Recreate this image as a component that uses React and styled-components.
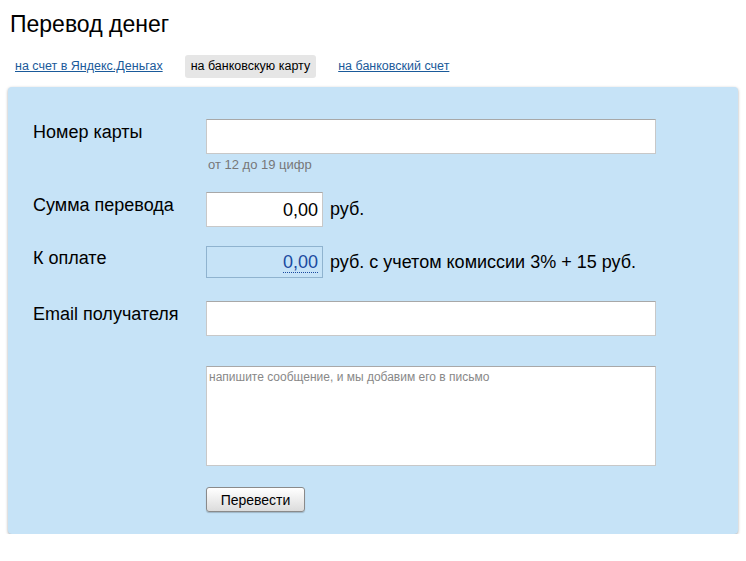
import styled, { createGlobalStyle } from 'styled-components';

const Global = createGlobalStyle`
  body {
    margin: 0;
    background: #ffffff;
    font-family: Arial, "Liberation Sans", sans-serif;
    color: #000;
  }
`;

const Page = styled.div`
  padding: 10px 8px 0 8px;
`;

const Title = styled.h1`
  margin: 0 0 0 2px;
  font-size: 23px;
  font-weight: normal;
  line-height: 28px;
`;

const Tabs = styled.div`
  display: flex;
  align-items: center;
  gap: 16px;
  margin: 17px 0 9px 0;
  font-size: 12.5px;
`;

const Tab = styled.span`
  padding: 4px 6px 5px;
  border-radius: 3px;
  color: ${(p) => (p.active ? '#000' : '#1a5a9a')};
  background: ${(p) => (p.active ? '#e6e6e6' : 'transparent')};
  text-decoration: ${(p) => (p.active ? 'none' : 'underline')};
  margin-left: ${(p) => (p.first ? '1px' : '0')};
`;

const Panel = styled.div`
  width: 730px;
  box-sizing: border-box;
  background: #c6e3f7;
  border-radius: 4px;
  box-shadow: 0 1px 3px rgba(0, 0, 0, 0.35);
  padding: 32px 25px 22px;
`;

const Row = styled.div`
  display: flex;
  align-items: flex-start;
  margin-bottom: ${(p) => p.mb || 0}px;
`;

const Label = styled.div`
  width: 173px;
  flex: none;
  font-size: 18px;
  padding-top: ${(p) => p.pt ?? 4}px;
`;

const Field = styled.div`
  display: flex;
  flex-direction: column;
`;

const Inline = styled.div`
  display: flex;
  align-items: center;
  gap: 7px;
  font-size: 18px;
`;

const Input = styled.div`
  box-sizing: border-box;
  width: ${(p) => p.w}px;
  height: ${(p) => p.h}px;
  background: ${(p) => (p.readonly ? '#c6e3f7' : '#fff')};
  border: 1px solid ${(p) => (p.readonly ? '#8fb3cf' : '#c8c8c8')};
  border-top-color: ${(p) => (p.readonly ? '#8fb3cf' : '#a8a8a8')};
  display: flex;
  align-items: center;
  justify-content: flex-end;
  padding: 0 4px;
  font-size: 18px;
`;

const Amount = styled.span`
  color: ${(p) => (p.link ? '#1a4aa0' : '#000')};
  border-bottom: ${(p) => (p.link ? '1px dotted #1a4aa0' : 'none')};
  line-height: 20px;
`;

const Hint = styled.div`
  font-size: 13px;
  color: #777;
  margin-top: 3px;
  padding-left: 2px;
`;

const Textarea = styled.div`
  box-sizing: border-box;
  width: 450px;
  height: 100px;
  background: #fff;
  border: 1px solid #c8c8c8;
  border-top-color: #a8a8a8;
  font-size: 12px;
  color: #888;
  padding: 3px 2px;
`;

const Button = styled.button`
  width: 99px;
  height: 25px;
  font-family: inherit;
  font-size: 14px;
  border: 1px solid #8a8a8a;
  border-radius: 3px;
  background: linear-gradient(#ffffff, #dcdcdc);
  box-shadow: 0 1px 1px rgba(0, 0, 0, 0.2);
  padding: 0;
`;

export default function App() {
  return (
    <Page>
      <Global />
      <Title>Перевод денег</Title>
      <Tabs>
        <Tab first>на счет в Яндекс.Деньгах</Tab>
        <Tab active>на банковскую карту</Tab>
        <Tab>на банковский счет</Tab>
      </Tabs>
      <Panel>
        <Row mb={20}>
          <Label pt={3}>Номер карты</Label>
          <Field>
            <Input w={450} h={35} />
            <Hint>от 12 до 19 цифр</Hint>
          </Field>
        </Row>
        <Row mb={19}>
          <Label pt={3}>Сумма перевода</Label>
          <Inline>
            <Input w={117} h={35}><Amount>0,00</Amount></Input>
            <span>руб.</span>
          </Inline>
        </Row>
        <Row mb={23}>
          <Label pt={2}>К оплате</Label>
          <Inline>
            <Input w={117} h={32} readonly><Amount link>0,00</Amount></Input>
            <span>руб. с учетом комиссии 3% + 15 руб.</span>
          </Inline>
        </Row>
        <Row mb={30}>
          <Label pt={3}>Email получателя</Label>
          <Input w={450} h={35} />
        </Row>
        <Row mb={21}>
          <Label />
          <Textarea>напишите сообщение, и мы добавим его в письмо</Textarea>
        </Row>
        <Row>
          <Label />
          <Button>Перевести</Button>
        </Row>
      </Panel>
    </Page>
  );
}
